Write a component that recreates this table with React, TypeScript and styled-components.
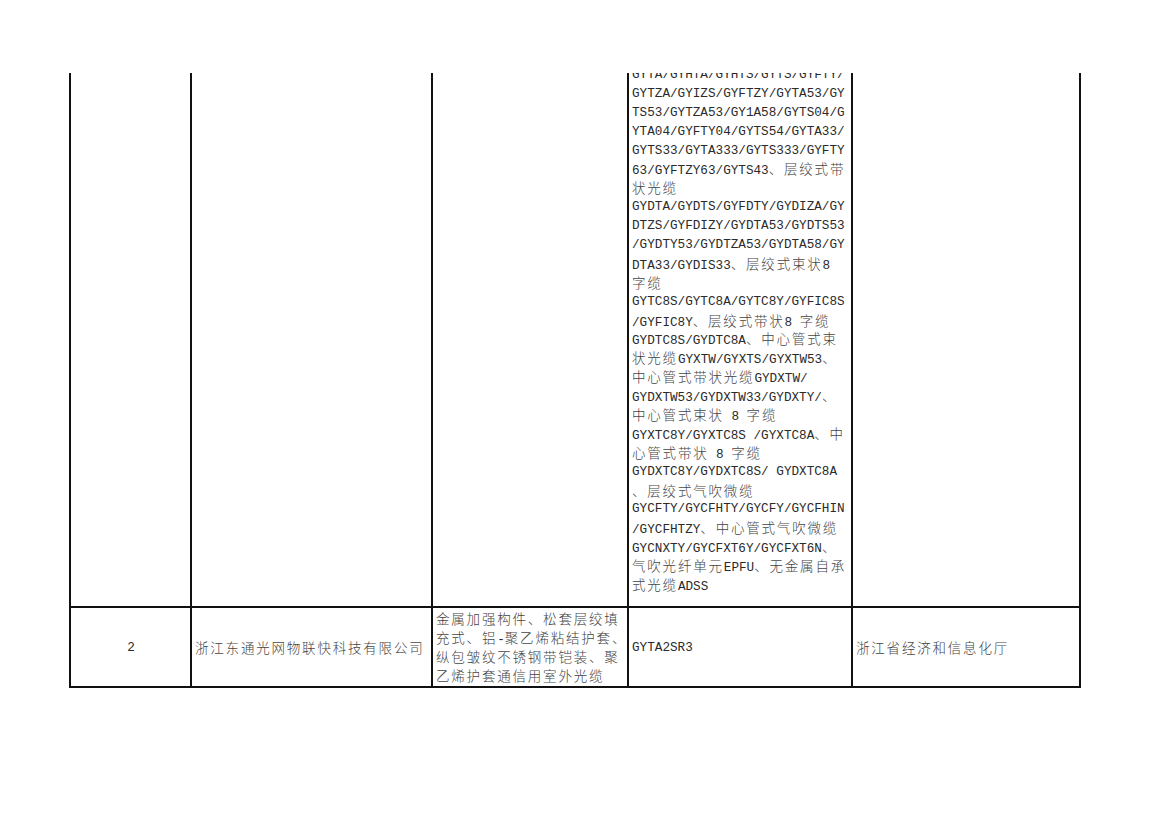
import React from 'react';
import styled, { createGlobalStyle } from 'styled-components';

const GlobalStyle = createGlobalStyle`
  html, body {
    margin: 0;
    padding: 0;
    background: #fff;
  }
  body {
    font-family: "Liberation Mono", "Noto Sans CJK SC", monospace;
    color: #222;
  }
`;

const LINE = 18.9;

const Page = styled.div`
  width: 1169px;
  height: 826px;
  padding-top: 73px;
  box-sizing: border-box;
  overflow: hidden;
`;

const Table = styled.div`
  margin-left: 69px;
  width: 1012px;
  border-left: 2px solid #111;
  display: grid;
  grid-template-columns: 121px 241px 196px 224px 228px;
  grid-template-rows: 535px 80px;
`;

const Cell = styled.div<{ $align?: 'left' | 'center'; $valign?: 'top' | 'center' }>`
  box-sizing: border-box;
  border-right: 2px solid #111;
  border-bottom: 2px solid #111;
  overflow: hidden;
  padding: 0 2px 0 3px;
  display: flex;
  flex-direction: column;
  justify-content: ${p => (p.$valign === 'top' ? 'flex-start' : 'center')};
  align-items: ${p => (p.$align === 'center' ? 'center' : 'flex-start')};
`;

// first row continues from the previous page, so its text starts above the clip
const ClippedText = styled.div`
  margin-top: -8px;
`;

const Line = styled.div`
  display: block;
  height: ${LINE}px;
  line-height: ${LINE}px;
  white-space: nowrap;
`;

const Han = styled.span`
  font-family: "Noto Sans CJK SC", sans-serif;
  font-size: 13.5px;
  font-weight: 300;
  letter-spacing: 1.8px;
  color: #444;
`;

const Latin = styled.span`
  font-family: "Liberation Mono", monospace;
  font-size: 12.67px;
  white-space: pre;
  color: #2a2a2a;
`;

const Mixed: React.FC<{ text: string }> = ({ text }) => (
  <>
    {text
      .split(/([\u2E80-\u9FFF\u3000-\u303F\uFF00-\uFFEF]+)/)
      .map((s, i) => (s ? (i % 2 ? <Han key={i}>{s}</Han> : <Latin key={i}>{s}</Latin>) : null))}
  </>
);

const models = [
  'GYTA/GYHTA/GYHTS/GYTS/GYFTY/',
  'GYTZA/GYIZS/GYFTZY/GYTA53/GY',
  'TS53/GYTZA53/GY1A58/GYTS04/G',
  'YTA04/GYFTY04/GYTS54/GYTA33/',
  'GYTS33/GYTA333/GYTS333/GYFTY',
  '63/GYFTZY63/GYTS43、层绞式带',
  '状光缆',
  'GYDTA/GYDTS/GYFDTY/GYDIZA/GY',
  'DTZS/GYFDIZY/GYDTA53/GYDTS53',
  '/GYDTY53/GYDTZA53/GYDTA58/GY',
  'DTA33/GYDIS33、层绞式束状8',
  '字缆',
  'GYTC8S/GYTC8A/GYTC8Y/GYFIC8S',
  '/GYFIC8Y、层绞式带状8 字缆',
  'GYDTC8S/GYDTC8A、中心管式束',
  '状光缆GYXTW/GYXTS/GYXTW53、',
  '中心管式带状光缆GYDXTW/',
  'GYDXTW53/GYDXTW33/GYDXTY/、',
  '中心管式束状 8 字缆',
  'GYXTC8Y/GYXTC8S /GYXTC8A、中',
  '心管式带状 8 字缆',
  'GYDXTC8Y/GYDXTC8S/ GYDXTC8A',
  '、层绞式气吹微缆',
  'GYCFTY/GYCFHTY/GYCFY/GYCFHIN',
  '/GYCFHTZY、中心管式气吹微缆',
  'GYCNXTY/GYCFXT6Y/GYCFXT6N、',
  '气吹光纤单元EPFU、无金属自承',
  '式光缆ADSS',
];

const product = [
  '金属加强构件、松套层绞填',
  '充式、铝-聚乙烯粘结护套、',
  '纵包皱纹不锈钢带铠装、聚',
  '乙烯护套通信用室外光缆',
];

export default function App() {
  return (
    <Page>
      <GlobalStyle />
      <Table>
        <Cell />
        <Cell />
        <Cell />
        <Cell $valign="top">
          <ClippedText>
            {models.map((m, i) => (
              <Line key={i}>
                <Mixed text={m} />
              </Line>
            ))}
          </ClippedText>
        </Cell>
        <Cell />

        <Cell $align="center">
          <Line>
            <Latin>2</Latin>
          </Line>
        </Cell>
        <Cell>
          <Line>
            <Mixed text="浙江东通光网物联快科技有限公司" />
          </Line>
        </Cell>
        <Cell>
          {product.map((p, i) => (
            <Line key={i}>
              <Mixed text={p} />
            </Line>
          ))}
        </Cell>
        <Cell>
          <Line>
            <Mixed text="GYTA2SR3" />
          </Line>
        </Cell>
        <Cell>
          <Line>
            <Mixed text="浙江省经济和信息化厅" />
          </Line>
        </Cell>
      </Table>
    </Page>
  );
}
